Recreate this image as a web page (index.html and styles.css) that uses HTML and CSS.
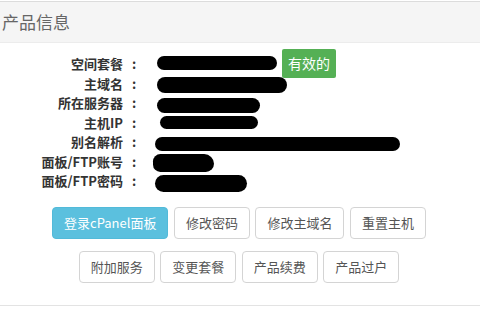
FILE: index.html
```html
<!DOCTYPE html>
<html lang="zh-CN">
<head>
<meta charset="utf-8">
<title>产品信息</title>
<link rel="stylesheet" href="styles.css">
</head>
<body>
<div class="panel">
  <div class="panel-heading">产品信息</div>
  <div class="panel-body">
    <div class="info">
      <div class="label">空间套餐</div><div class="colon">:</div>
      <div class="value"><span class="blob b1"></span><span class="badge">有效的</span></div>
      <div class="label">主域名</div><div class="colon">:</div>
      <div class="value"><span class="blob b2"></span></div>
      <div class="label">所在服务器</div><div class="colon">:</div>
      <div class="value"><span class="blob b3"></span></div>
      <div class="label">主机IP</div><div class="colon">:</div>
      <div class="value"><span class="blob b4"></span></div>
      <div class="label">别名解析</div><div class="colon">:</div>
      <div class="value"><span class="blob b5"></span></div>
      <div class="label">面板/FTP账号</div><div class="colon">:</div>
      <div class="value"><span class="blob b6"></span></div>
      <div class="label">面板/FTP密码</div><div class="colon">:</div>
      <div class="value"><span class="blob b7"></span></div>
    </div>
    <div class="actions">
      <div class="btn-row">
        <button class="btn btn-info">登录cPanel面板</button>
        <button class="btn">修改密码</button>
        <button class="btn">修改主域名</button>
        <button class="btn">重置主机</button>
      </div>
      <div class="btn-row">
        <button class="btn">附加服务</button>
        <button class="btn">变更套餐</button>
        <button class="btn">产品续费</button>
        <button class="btn">产品过户</button>
      </div>
    </div>
  </div>
</div>
</body>
</html>
```

FILE: styles.css
```css
html, body {
  margin: 0;
  padding: 0;
  background: #fff;
}
body {
  font-family: "Noto Sans CJK SC", "Noto Sans", sans-serif;
  width: 480px;
  height: 320px;
  overflow: hidden;
}
.panel {
  margin-top: 1px;
  border-top: 1px solid #dcdcdc;
  border-bottom: 1px solid #e3e3e3;
}
.panel-heading {
  height: 40px;
  line-height: 40px;
  background: #f5f5f5;
  border-bottom: 1px solid #ececec;
  padding-left: 2px;
  font-size: 17px;
  color: #666;
}
.panel-body {
  padding: 11px 0 22px 0;
}
.info {
  display: grid;
  grid-template-columns: 123px 30px 1fr;
  grid-auto-rows: 19.5px;
  align-items: center;
  font-size: 13px;
  font-weight: bold;
  color: #333;
}
.label {
  text-align: right;
  white-space: nowrap;
  line-height: 19.5px;
}
.colon {
  padding-left: 9px;
  line-height: 19.5px;
}
.value {
  display: flex;
  align-items: center;
  gap: 5px;
  height: 19.5px;
}
.blob {
  display: block;
  background: #000;
  border-radius: 999px;
  flex: none;
}
.b1 { width: 120px; height: 14px; margin-left: 4px; margin-top: -2px; }
.b2 { width: 130px; height: 16px; margin-left: 4px; margin-top: 4px; }
.b3 { width: 103px; height: 15px; margin-left: 4px; margin-top: 5px; }
.b4 { width: 98px; height: 13px; margin-left: 7px; margin-top: 1px; }
.b5 { width: 245px; height: 14px; margin-left: 2px; margin-top: 4px; }
.b6 { width: 61px; height: 18px; margin-left: 0; margin-top: 4px; border-radius: 9px 12px 10px 9px; }
.b7 { width: 92px; height: 17px; margin-left: 2px; margin-top: 5px; }
.badge {
  display: block;
  flex: none;
  height: 29px;
  line-height: 29px;
  padding: 0 6px;
  background: #55b055;
  color: #fff;
  font-size: 14px;
  font-weight: normal;
  border-radius: 2px;
  margin-top: -1px;
}
.actions {
  margin-top: 16px;
  display: flex;
  flex-direction: column;
  gap: 12px;
  padding-right: 2px;
}
.btn-row {
  display: flex;
  justify-content: center;
  gap: 5.5px;
}
.btn {
  height: 32px;
  padding: 0 11px;
  font-family: "Noto Sans CJK SC", "Noto Sans", sans-serif;
  font-size: 13px;
  line-height: 30px;
  color: #555;
  background: #fff;
  border: 1px solid #d4d4d4;
  border-radius: 4px;
  white-space: nowrap;
}
.btn-info {
  background: #5bc0de;
  border-color: #52bad9;
  color: #fff;
}
```
